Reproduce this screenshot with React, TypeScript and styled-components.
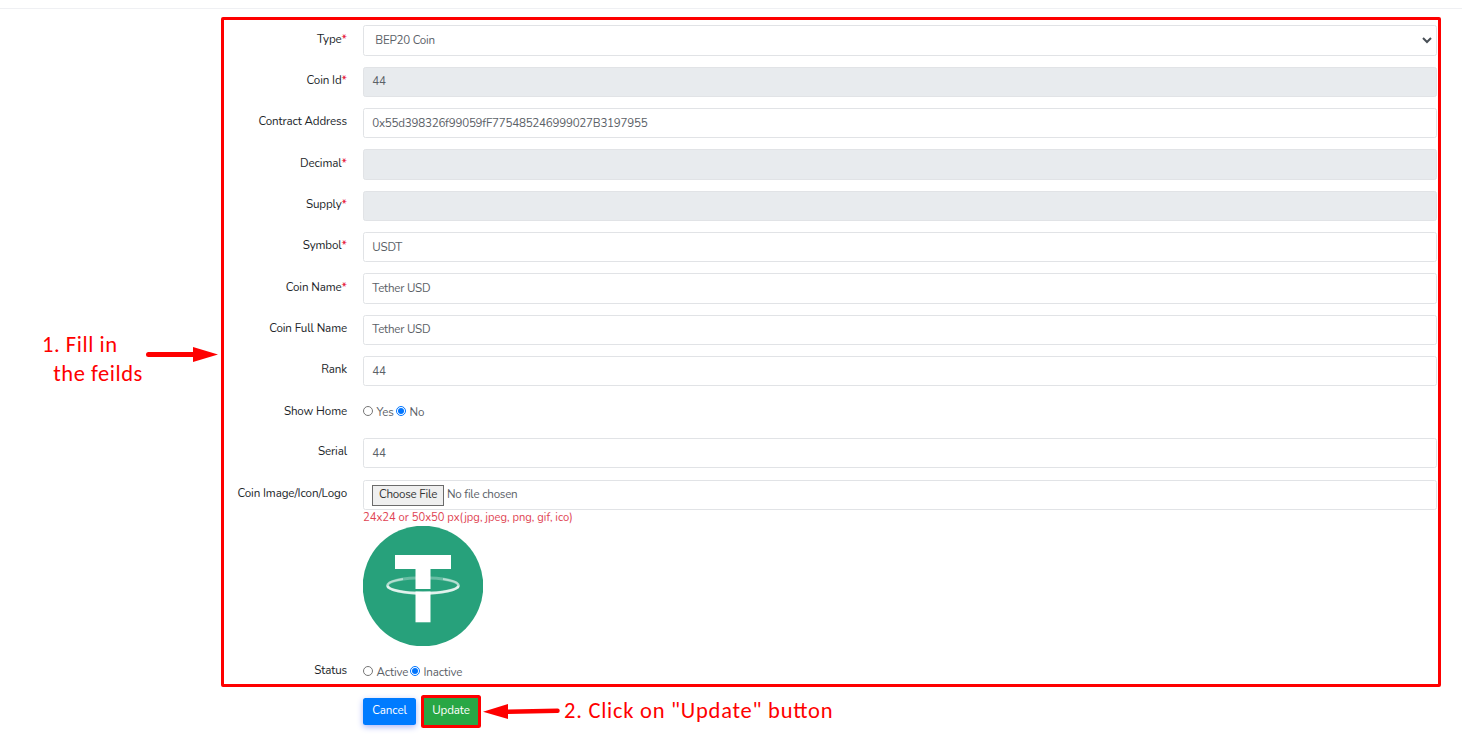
import React from "react";
import styled, { createGlobalStyle } from "styled-components";

const Global = createGlobalStyle`
  *, *::before, *::after { box-sizing: border-box; }
  body { margin: 0; background: #fff; font-family: "Nunito", "Noto Sans", sans-serif; font-size: 12px; color: #5b6167; }
`;

const Page = styled.div`
  width: 1462px;
  height: 739px;
  padding-top: 8px;
  overflow: hidden;
`;
const Divider = styled.div`
  height: 1px;
  background: #eff0f3;
`;
const Columns = styled.main`
  display: grid;
  grid-template-columns: 221px 1220px;
  padding-top: 8px;
`;
const Frame = styled.section`
  height: 670px;
  border: 3px solid #fe0000;
  border-radius: 2px;
  padding: 5.33px 1px 0 0;
`;
const Row = styled.div<{ $h?: number }>`
  display: grid;
  grid-template-columns: 123px 1fr;
  column-gap: 16px;
  height: ${(p) => p.$h ?? 41.333}px;
`;
const Label = styled.label<{ $top?: number }>`
  padding-top: ${(p) => p.$top ?? 5.3}px;
  line-height: 16px;
  font-size: 11.6px;
  text-align: right;
  white-space: nowrap;
  color: #212529;
  span { letter-spacing: -0.12px; }
`;
const Star = styled.b`
  font-weight: 400;
  font-size: 12px;
  line-height: 1;
  color: #e4002b;
`;
const Field = styled.div<{ $off?: boolean; $pad?: number }>`
  display: flex;
  align-items: center;
  height: 30.333px;
  padding: 0 4px 0.8px ${(p) => p.$pad ?? 8.3}px;
  border: 1px solid #e1e3e6;
  border-radius: 2.5px;
  background: ${(p) => (p.$off ? "#e8ebee" : "#fff")};
  font-size: 11.6px;
  line-height: 16px;
  letter-spacing: -0.24px;
  > span { flex: 1; }
`;
const Choices = styled.div<{ $top: number }>`
  display: flex;
  align-items: center;
  height: 16px;
  margin-top: ${(p) => p.$top}px;
  font-size: 11.6px;
`;
const Radio = styled.input`
  width: 10px;
  height: 10px;
  margin: 0 3.5px 0 0;
`;
const Choice = styled.span<{ $w: number; $drop?: number }>`
  width: ${(p) => p.$w}px;
  line-height: 16px;
  white-space: nowrap;
  padding-top: ${(p) => p.$drop ?? 1}px;
  letter-spacing: -0.15px;
`;
const FileButton = styled.button`
  width: 72px;
  height: 21px;
  margin: 2px 3px 0 0;
  padding: 0 0 3px;
  border: 1px solid #6b6b6b;
  border-radius: 0;
  background: #efefef;
  font: inherit;
  letter-spacing: inherit;
  color: #333;
`;
const FileName = styled.em`
  font-style: normal;
  padding-bottom: 1px;
`;
const Hint = styled.p`
  margin: 0;
  height: 16px;
  line-height: 16px;
  font-size: 11.2px;
  color: #e04352;
`;
const CoinLogo = styled.svg`
  display: block;
`;
const Side = styled.aside`
  display: flex;
  padding: 313px 0 0 42px;
`;
const Note = styled.div`
  font-family: Carlito, "Noto Sans", sans-serif;
  font-size: 22.5px;
  letter-spacing: 0.75px;
  font-feature-settings: "liga";
  line-height: 29px;
  color: #fe0000;
  white-space: pre;
`;
const SideNote = styled(Note)`
  width: 104px;
  letter-spacing: 0.55px;
`;
const ActionNote = styled(Note)`
  padding-bottom: 2px;
`;
const SideArrow = styled.svg`
  flex: none;
  margin-top: 16px;
`;
const Actions = styled.footer`
  display: flex;
  align-items: center;
  height: 32px;
  margin-top: 8.5px;
  padding-left: 363px;
`;
const Button = styled.button`
  width: 53px;
  height: 27px;
  padding: 0 0 3px;
  border: 0;
  border-radius: 2.5px;
  background: #007bff;
  box-shadow: 0 2px 6px #acb5f6;
  font: 11.6px "Nunito", "Noto Sans", sans-serif;
  letter-spacing: -0.1px;
  color: #fff;
`;
const UpdateButton = styled(Button)`
  width: 60px;
  height: 33px;
  margin: 0 2px 0 5px;
  border: 3px solid #fe0000;
  background: #28a745;
  box-shadow: none;
`;

type Item = { label: string; star?: boolean; value?: string; off?: boolean; h?: number };
const fields: Item[] = [
  { label: "Coin Id", star: true, value: "44", off: true },
  { label: "Contract Address", value: "0x55d398326f99059fF775485246999027B3197955" },
  { label: "Decimal", star: true, off: true },
  { label: "Supply", star: true, off: true },
  { label: "Symbol", star: true, value: "USDT" },
  { label: "Coin Name", star: true, value: "Tether USD" },
  { label: "Coin Full Name", value: "Tether USD" },
  { label: "Rank", value: "44" },
];

const FieldRow = ({ label, star, value, off, h }: Item) => (
  <Row $h={h}>
    <Label><span>{label}</span>{star && <Star>*</Star>}</Label>
    <Field $off={off}><span>{value}</span></Field>
  </Row>
);

export default function App() {
  return (
    <Page>
      <Global />
      <Divider />
      <Columns>
        <Side>
          <SideNote>{"1. Fill in\n  the feilds"}</SideNote>
          <SideArrow width="72" height="17" viewBox="0 0 72 17">
            <path d="M2.5 8.5H50" stroke="#fe0000" strokeWidth="5" strokeLinecap="round" />
            <path d="M47 1L72 8.5L47 16Z" fill="#fe0000" />
          </SideArrow>
        </Side>
        <Frame>
          <Row>
            <Label><span>Type</span><Star>*</Star></Label>
            <Field $pad={11.3}>
              <span>BEP20 Coin</span>
              <svg width="10" height="8" viewBox="0 0 10 8">
                <path d="M1 2L5 6L9 2" fill="none" stroke="#495057" strokeWidth="2" />
              </svg>
            </Field>
          </Row>
          {fields.map((f) => <FieldRow key={f.label} {...f} />)}
          <Row $h={40.667}>
            <Label><span>Show Home</span></Label>
            <Choices $top={6}>
              <Radio type="radio" name="home" /><Choice $w={19.5}>Yes</Choice>
              <Radio type="radio" name="home" defaultChecked /><Choice $w={20}>No</Choice>
            </Choices>
          </Row>
          <FieldRow label="Serial" value="44" h={41.667} />
          <Row $h={180}>
            <Label><span>Coin Image/Icon/Logo</span></Label>
            <div>
              <Field $pad={8}>
                <FileButton>Choose File</FileButton>
                <FileName>No file chosen</FileName>
              </Field>
              <Hint>24x24 or 50x50 px(jpg, jpeg, png, gif, ico)</Hint>
              <CoinLogo width="120" height="120" viewBox="0 0 120 120">
                <circle cx="60" cy="60" r="60.3" fill="#27a17b" />
                <ellipse cx="60" cy="59.5" rx="35.5" ry="7.8" fill="none" stroke="#fff" strokeOpacity="0.3" strokeWidth="3" />
                <path d="M24.5 59.5A35.5 7.8 0 0 0 95.5 59.5" fill="none" stroke="#fff" strokeOpacity="0.8" strokeWidth="2.6" />
                <path d="M24.5 59.5C24.5 57 30 54.5 40 53M95.5 59.5C95.5 57 90 54.5 80 53" fill="none" stroke="#fff" strokeOpacity="0.5" strokeWidth="2" />
                <path d="M32 29H88V43H67.5V63H52.5V43H32Z" fill="#fff" />
                <path d="M52.5 65.5H67.5V96.3H52.5Z" fill="#fff" />
              </CoinLogo>
            </div>
          </Row>
          <Row $h={24}>
            <Label $top={2.5}><span>Status</span></Label>
            <Choices $top={3}>
              <Radio type="radio" name="status" /><Choice $w={33.5} $drop={2}>Active</Choice>
              <Radio type="radio" name="status" defaultChecked /><Choice $w={40} $drop={2}>Inactive</Choice>
            </Choices>
          </Row>
        </Frame>
      </Columns>
      <Actions>
        <Button>Cancel</Button>
        <UpdateButton>Update</UpdateButton>
        <svg width="81" height="16" viewBox="0 0 81 16">
          <path d="M25 7.8L74.5 6.8" stroke="#fe0000" strokeWidth="4.5" strokeLinecap="round" />
          <path d="M0 7.8L25 0V15Z" fill="#fe0000" />
        </svg>
        <ActionNote>2. Click on "Update" button</ActionNote>
      </Actions>
    </Page>
  );
}
